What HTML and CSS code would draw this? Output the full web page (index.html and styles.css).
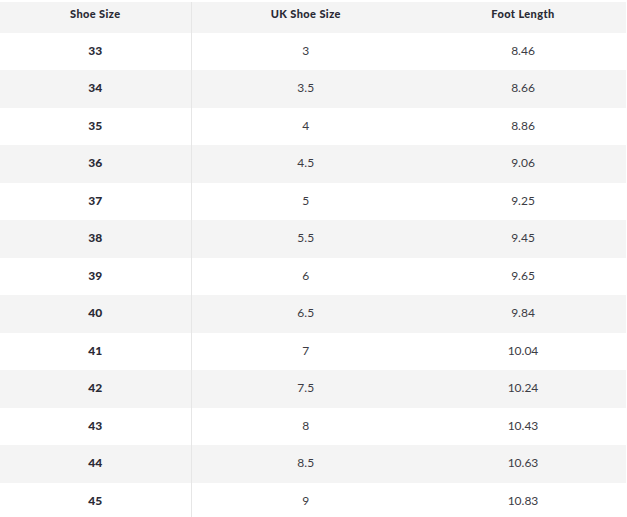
FILE: index.html
```html
<!DOCTYPE html>
<html>
<head>
<meta charset="utf-8">
<link rel="stylesheet" href="styles.css">
</head>
<body>
<table class="size-table">
  <colgroup>
    <col class="c1"><col class="c2"><col class="c3">
  </colgroup>
  <thead>
    <tr><th>Shoe Size</th><th>UK Shoe Size</th><th>Foot Length</th></tr>
  </thead>
  <tbody>
    <tr><td class="size">33</td><td>3</td><td>8.46</td></tr>
    <tr><td class="size">34</td><td>3.5</td><td>8.66</td></tr>
    <tr><td class="size">35</td><td>4</td><td>8.86</td></tr>
    <tr><td class="size">36</td><td>4.5</td><td>9.06</td></tr>
    <tr><td class="size">37</td><td>5</td><td>9.25</td></tr>
    <tr><td class="size">38</td><td>5.5</td><td>9.45</td></tr>
    <tr><td class="size">39</td><td>6</td><td>9.65</td></tr>
    <tr><td class="size">40</td><td>6.5</td><td>9.84</td></tr>
    <tr><td class="size">41</td><td>7</td><td>10.04</td></tr>
    <tr><td class="size">42</td><td>7.5</td><td>10.24</td></tr>
    <tr><td class="size">43</td><td>8</td><td>10.43</td></tr>
    <tr><td class="size">44</td><td>8.5</td><td>10.63</td></tr>
    <tr><td class="size">45</td><td>9</td><td>10.83</td></tr>
  </tbody>
</table>
</body>
</html>
```
FILE: styles.css
```css
html, body {
  margin: 0;
  padding: 0;
  background: #ffffff;
}
body {
  padding-top: 2px;
  font-family: "Lato", "Liberation Sans", sans-serif;
  overflow: hidden;
}
.size-table {
  width: 626px;
  border-collapse: collapse;
  table-layout: fixed;
}
.c1 { width: 191px; }
.c2 { width: 229px; }
.c3 { width: 206px; }
.size-table th {
  height: 30.7px;
  box-sizing: border-box;
  padding: 5px 0 0;
  vertical-align: top;
  text-align: center;
  font-size: 11px;
  font-weight: 900;
  letter-spacing: 0.4px;
  color: #2a2a35;
  background: #f4f4f4;
}
.size-table td {
  height: 37.5px;
  box-sizing: border-box;
  padding: 0 0 2px;
  text-align: center;
  vertical-align: middle;
  font-size: 12px;
  color: #3c3c44;
}
.size-table td.size {
  font-weight: 900;
  color: #2a2a35;
}
.size-table th:first-child,
.size-table td:first-child {
  border-right: 1px solid #e6e6e6;
}
.size-table tbody tr:nth-child(even) td {
  background: #f4f4f4;
}
```
